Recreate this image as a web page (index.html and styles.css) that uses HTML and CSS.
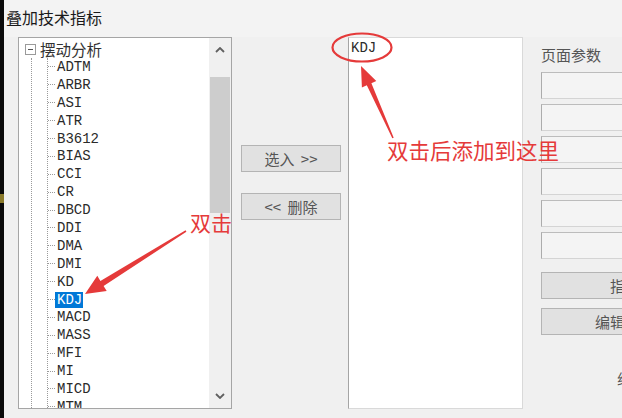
FILE: index.html
```html
<!DOCTYPE html>
<html lang="zh-CN">
<head>
    <meta charset="UTF-8">
    <meta name="viewport" content="width=device-width, initial-scale=1.0">
    <title>叠加技术指标</title>
    <link rel="stylesheet" href="styles.css">
</head>
<body>
    <div class="screen">
        <div class="edge"><span class="edge-mark"></span></div>

        <div class="dialog">
            <div class="title">叠加技术指标</div>

            <div class="content">
                <!-- 指标树 -->
                <div class="tree">
                    <div class="tree-body">
                        <div class="root-row">
                            <span class="toggle"></span>
                            <span class="root-label">摆动分析</span>
                        </div>
                        <div class="branch">
                            <ul class="children">
                                <li><span>ADTM</span></li>
                                <li><span>ARBR</span></li>
                                <li><span>ASI</span></li>
                                <li><span>ATR</span></li>
                                <li><span>B3612</span></li>
                                <li><span>BIAS</span></li>
                                <li><span>CCI</span></li>
                                <li><span>CR</span></li>
                                <li><span>DBCD</span></li>
                                <li><span>DDI</span></li>
                                <li><span>DMA</span></li>
                                <li><span>DMI</span></li>
                                <li><span>KD</span></li>
                                <li><span class="selected">KDJ</span></li>
                                <li><span>MACD</span></li>
                                <li><span>MASS</span></li>
                                <li><span>MFI</span></li>
                                <li><span>MI</span></li>
                                <li><span>MICD</span></li>
                                <li><span>MTM</span></li>
                            </ul>
                        </div>
                    </div>
                    <div class="scrollbar">
                        <div class="sb-btn">
                            <svg width="10" height="6" viewBox="0 0 10 6"><polyline points="1,5 5,1 9,5" fill="none" stroke="#606060" stroke-width="1.8"/></svg>
                        </div>
                        <div class="sb-thumb"></div>
                        <div class="sb-space"></div>
                        <div class="sb-btn">
                            <svg width="10" height="6" viewBox="0 0 10 6"><polyline points="1,1 5,5 9,1" fill="none" stroke="#606060" stroke-width="1.8"/></svg>
                        </div>
                    </div>
                </div>

                <!-- 选入 / 删除 -->
                <div class="middle">
                    <button class="btn">选入 &gt;&gt;</button>
                    <button class="btn">&lt;&lt; 删除</button>
                </div>

                <!-- 已选指标 -->
                <div class="picked">
                    <div class="picked-item">KDJ</div>
                </div>

                <!-- 参数 -->
                <div class="params">
                    <div class="params-label">页面参数</div>
                    <div class="param-box"></div>
                    <div class="param-box"></div>
                    <div class="param-box"></div>
                    <div class="param-box"></div>
                    <div class="param-box"></div>
                    <div class="param-box"></div>
                    <button class="btn wide first">指标用法</button>
                    <button class="btn wide">编辑指标公式</button>
                    <div class="params-foot">组</div>
                </div>
            </div>
        </div>

        <!-- 标注 -->
        <svg class="marks" width="622" height="418" viewBox="0 0 622 418">
            <ellipse cx="362" cy="47.5" rx="29.5" ry="14" fill="none" stroke="#e53a3a" stroke-width="2.2"/>
            <polygon fill="#e53a3a" points="393.7,137.7 371.4,83.3 376.3,81.1 361,66 361.9,87.5 366.8,85.3 392.3,138.3"/>
            <polygon fill="#e53a3a" points="186.4,231.7 103.6,286 106.7,291 85,294 97.3,275.8 100.4,280.9 185.6,230.3"/>
        </svg>
        <div class="note note-add">双击后添加到这里</div>
        <div class="note note-dbl">双击</div>
    </div>
</body>
</html>
```

FILE: styles.css
```css
body {
    margin: 0;
    padding: 0;
    background: #f0f0f0;
    font-family: "Noto Sans CJK SC", sans-serif;
    color: #222;
}

.screen {
    position: relative;
    display: flex;
    width: 622px;
    height: 418px;
    overflow: hidden;
}

.edge {
    width: 5px;
    background: #0a0a0a;
    display: flex;
    flex-direction: column;
    padding-top: 194px;
    box-sizing: border-box;
}

.edge-mark {
    width: 4px;
    height: 9px;
    background: #8a7a2a;
}

.dialog {
    flex: 1;
    display: flex;
    flex-direction: column;
}

.title {
    height: 37px;
    line-height: 34px;
    padding-left: 2px;
    font-size: 16px;
    color: #1a1a1a;
    background: #f3f3f3;
}

.content {
    display: flex;
    padding-left: 14px;
    height: 372px;
}

/* 指标树 */
.tree {
    width: 214px;
    display: flex;
    background: #fff;
    border: 1px solid #a5a5a5;
    box-sizing: border-box;
}

.tree-body {
    flex: 1;
    padding: 2px 0 0 6px;
    overflow: hidden;
}

.root-row {
    display: flex;
    align-items: center;
    height: 18px;
}

.toggle {
    position: relative;
    width: 11px;
    height: 11px;
    border: 1px solid #9a9a9a;
    box-sizing: border-box;
    margin-right: 4px;
    background: #fff;
}

.toggle::after {
    content: "";
    position: absolute;
    left: 2px;
    right: 2px;
    top: 4px;
    border-top: 1px solid #555;
}

.root-label {
    font-size: 15.5px;
    color: #333;
    line-height: 18px;
}

.branch {
    margin-left: 6px;
    border-left: 1px dotted #9a9a9a;
}

.children {
    list-style: none;
    margin: 0 0 0 15px;
    padding: 0;
    border-left: 1px dotted #9a9a9a;
}

.children li {
    display: flex;
    align-items: center;
    height: 17.9px;
    font-family: "Liberation Mono", monospace;
    font-size: 14px;
    color: #2a2a2a;
}

.children li::before {
    content: "";
    width: 7px;
    border-top: 1px dotted #9a9a9a;
}

.children li span {
    padding: 0 1px 0 2px;
    line-height: 16px;
}

.children li .selected {
    background: #0078d7;
    color: #fff;
}

.scrollbar {
    width: 22px;
    display: flex;
    flex-direction: column;
    align-items: center;
    background: #f0f0f0;
}

.sb-btn {
    height: 24px;
    width: 100%;
    display: flex;
    align-items: center;
    justify-content: center;
}

.sb-thumb {
    margin-top: 15px;
    width: 20px;
    height: 136px;
    background: #cdcdcd;
}

.sb-space {
    flex: 1;
}

/* 按钮 */
.btn {
    height: 27px;
    font-family: "Noto Sans CJK SC", sans-serif;
    font-size: 15px;
    color: #555;
    background: #e1e1e1;
    border: 1px solid #b4b4b4;
    padding: 0;
    word-spacing: 3px;
}

.middle {
    width: 116px;
    display: flex;
    flex-direction: column;
    gap: 21px;
    padding: 108px 0 0 9px;
    box-sizing: border-box;
}

.middle .btn {
    width: 100px;
}

/* 已选列表 */
.picked {
    width: 175px;
    background: #fff;
    border: 1px solid #d9d9d9;
    border-left-color: #a5a5a5;
    box-sizing: border-box;
    padding: 2px 0 0 2px;
}

.picked-item {
    font-family: "Liberation Mono", monospace;
    font-size: 14px;
    line-height: 17px;
    color: #2a2a2a;
}

/* 参数 */
.params {
    display: flex;
    flex-direction: column;
    gap: 5px;
    padding: 8px 0 0 18px;
    flex-shrink: 0;
}

.params-label {
    font-size: 15px;
    line-height: 20px;
    color: #555;
    margin-bottom: 2px;
}

.param-box {
    width: 120px;
    height: 27px;
    background: #f4f4f4;
    border: 1px solid #d4d4d4;
    border-left-color: #acacac;
    border-top-color: #bcbcbc;
    box-sizing: border-box;
}

.btn.wide {
    width: 198px;
}

.btn.first {
    margin-top: 8px;
    margin-bottom: 4px;
}

.params-foot {
    margin: 28px 0 0 76px;
    font-size: 15px;
    color: #555;
}

/* 标注 */
.marks {
    position: absolute;
    left: 0;
    top: 0;
    pointer-events: none;
}

.note {
    position: absolute;
    color: #e53a3a;
    white-space: nowrap;
}

.note-add {
    left: 387px;
    top: 136px;
    font-size: 21.5px;
    line-height: 28px;
}

.note-dbl {
    left: 190px;
    top: 208px;
    font-size: 21px;
    line-height: 28px;
}
```
